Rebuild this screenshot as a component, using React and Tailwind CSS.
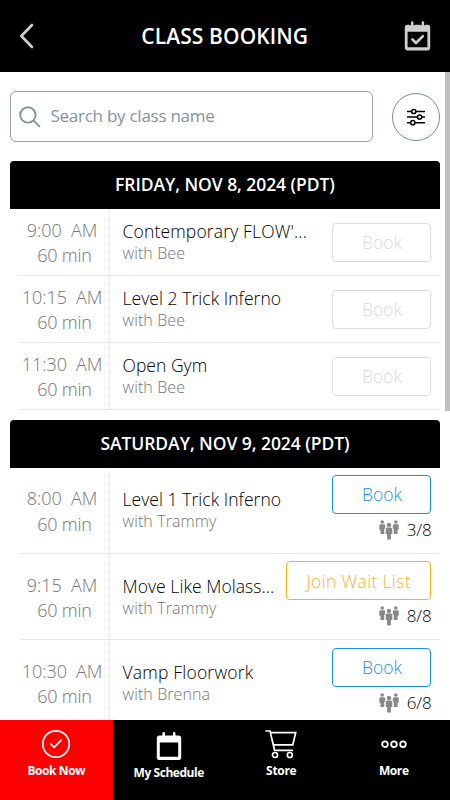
import React, { useState } from 'react';

const days = [
  {
    id: 1,
    date: "FRIDAY, NOV 8, 2024 (PDT)",
    rowClass: "h-[67.2px]",
    classes: [
      { id: 11, time: "9:00", name: "Contemporary FLOW'...", nameClass: "tracking-[0.16px]", teacher: "Bee", status: "closed" },
      { id: 12, time: "10:15", name: "Level 2 Trick Inferno", nameClass: "tracking-[0.05px]", teacher: "Bee", status: "closed" },
      { id: 13, time: "11:30", name: "Open Gym", nameClass: "tracking-[0.03px]", teacher: "Bee", status: "closed" },
    ],
  },
  {
    id: 2,
    date: "SATURDAY, NOV 9, 2024 (PDT)",
    rowClass: "h-[86.3px]",
    classes: [
      { id: 21, time: "8:00", name: "Level 1 Trick Inferno", nameClass: "tracking-[0.05px]", teacher: "Trammy", status: "open", spots: "3/8" },
      { id: 22, time: "9:15", name: "Move Like Molass...", nameClass: "tracking-[0.06px]", teacher: "Trammy", status: "full", spots: "8/8" },
      { id: 23, time: "10:30", name: "Vamp Floorwork", nameClass: "tracking-[0.2px]", teacher: "Brenna", status: "open", spots: "6/8" },
    ],
  },
];

const buttonStyles = {
  closed: "w-[99px] border-[#dedede] text-[#d9d9d9]",
  open: "w-[99px] border-[#1890ea] text-[#1890ea]",
  full: "w-[145.5px] border-[#fbb116] text-[#fbb03b] tracking-[0.35px]",
};

function BackIcon() {
  return (
    <svg width="16" height="28" viewBox="0 0 16 28" fill="none" stroke="#cfcfcf" strokeWidth="2.6" strokeLinecap="round" strokeLinejoin="round">
      <path d="M13 3 L2.3 14 L13 25" />
    </svg>
  );
}

function CalendarCheckIcon() {
  return (
    <svg width="27" height="31" viewBox="0 0 27 31" fill="none">
      <path fill="#cfcfcf" fillRule="evenodd" d="M3.5 3.8 H23.5 Q26.2 3.8 26.2 6.6 V26.6 Q26.2 29.4 23.5 29.4 H3.5 Q0.8 29.4 0.8 26.6 V6.6 Q0.8 3.8 3.5 3.8 Z M3.6 10.8 V26.2 H23.4 V10.8 Z" />
      <path stroke="#000" strokeWidth="5" d="M8.2 3 V4.2 M18.9 3 V4.2" />
      <path stroke="#cfcfcf" strokeWidth="2.5" strokeLinecap="round" d="M8.2 1.4 V6 M18.9 1.4 V6" />
      <path stroke="#cfcfcf" strokeWidth="2.5" strokeLinecap="round" strokeLinejoin="round" d="M8.4 18.4 L12 22 L18.9 15.2" />
    </svg>
  );
}

function SearchIcon() {
  return (
    <svg width="22" height="22" viewBox="0 0 22 22" fill="none" stroke="#84949c" strokeWidth="1.9" strokeLinecap="round">
      <circle cx="8.9" cy="8.9" r="7.7" />
      <path d="M14.5 14.5 L20.4 20.4" />
    </svg>
  );
}

function FilterIcon() {
  return (
    <svg width="18" height="18" viewBox="0 0 18 18" fill="none" stroke="#000" strokeWidth="1.5">
      <path d="M0 3.5 H4.5 M9.1 3.5 H18 M0 9 H10.3 M14.9 9 H18 M0 14.7 H3.5 M8.1 14.7 H18" />
      <circle cx="6.8" cy="3.5" r="2.1" />
      <circle cx="12.6" cy="9" r="2.1" />
      <circle cx="5.8" cy="14.7" r="2.1" />
    </svg>
  );
}

function PeopleIcon() {
  return (
    <svg width="20" height="20" viewBox="0 0 20 20" fill="#888">
      <circle cx="3.2" cy="2" r="1.8" />
      <path d="M1.6 4.3 H4.9 Q6.2 4.3 6.2 5.6 V8.8 H5.2 V14 H1.5 V9.8 H0.3 V5.6 Q0.3 4.3 1.6 4.3 Z" />
      <circle cx="16.8" cy="2" r="1.8" />
      <path d="M15.1 4.3 H18.4 Q19.7 4.3 19.7 5.6 V9.8 H18.5 V14 H14.8 V8.8 H13.8 V5.6 Q13.8 4.3 15.1 4.3 Z" />
      <circle cx="10" cy="5" r="2.2" />
      <path d="M8.3 7.6 H11.7 Q13.3 7.6 13.3 9.2 V14 H11.9 V19.6 H8.1 V14 H6.7 V9.2 Q6.7 7.6 8.3 7.6 Z" />
    </svg>
  );
}

function BookNowIcon() {
  return (
    <svg width="30" height="30" viewBox="0 0 30 30" fill="none" stroke="#fff" strokeWidth="1.7" strokeLinecap="round" strokeLinejoin="round">
      <circle cx="15" cy="15" r="13.2" />
      <path d="M9.7 15 L13.2 18.4 L20.3 11.2" />
    </svg>
  );
}

function ScheduleIcon() {
  return (
    <svg width="26" height="30" viewBox="0 0 26 30" fill="none">
      <path fill="#fff" fillRule="evenodd" d="M3.6 4.6 H22.4 Q25.2 4.6 25.2 7.4 V26.2 Q25.2 29 22.4 29 H3.6 Q0.8 29 0.8 26.2 V7.4 Q0.8 4.6 3.6 4.6 Z M3.8 11.5 V25.8 H22.2 V11.5 Z" />
      <path stroke="#fff" strokeWidth="2.6" strokeLinecap="round" d="M7.7 2.4 V6 M18.2 2.4 V6" />
    </svg>
  );
}

function StoreIcon() {
  return (
    <svg width="32" height="30" viewBox="0 0 32 30" fill="none" stroke="#fff" strokeWidth="1.7">
      <path d="M0.4 2 H5 L9.6 21.3 H28" />
      <path d="M5.6 3.6 H30.7 L27.8 15.8 H8.4" />
      <circle cx="10" cy="26" r="2.5" />
      <circle cx="24.8" cy="26" r="2.5" />
    </svg>
  );
}

function MoreIcon() {
  return (
    <svg width="28" height="30" viewBox="0 0 28 30" fill="none" stroke="#fff" strokeWidth="1.8">
      <circle cx="5" cy="15.2" r="2.8" />
      <circle cx="14" cy="15.2" r="2.8" />
      <circle cx="23" cy="15.2" r="2.8" />
    </svg>
  );
}

const tabs = [
  { id: "book", label: "Book Now", icon: <BookNowIcon />, padding: "pt-[9.5px]", labelClass: "mt-[2.5px] tracking-[-0.4px]" },
  { id: "schedule", label: "My Schedule", icon: <ScheduleIcon />, padding: "pt-[11.5px]", labelClass: "mt-[2.5px] tracking-[-0.45px]" },
  { id: "store", label: "Store", icon: <StoreIcon />, padding: "pt-[9.5px]", labelClass: "mt-[2.5px] tracking-[-0.3px]" },
  { id: "more", label: "More", icon: <MoreIcon />, padding: "pt-[9.5px]", labelClass: "mt-[2.5px] tracking-[-0.4px]" },
];

function ClassRow({ info, rowClass }) {
  const closed = info.status === "closed";

  return (
    <li className={`ml-[9.5px] flex shrink-0 border-b border-[#e4e8ea] ${rowClass}`}>
      <div className="flex w-[91px] shrink-0 flex-col items-center justify-center border-r border-dotted border-[#dfe5e7] pt-[3px] pr-1 text-[18px] leading-[25.5px] text-[#757575]">
        <p className="flex gap-[9px]"><span>{info.time}</span><span>AM</span></p>
        <p className="pl-[5px] tracking-[-0.25px]">60 min</p>
      </div>
      <div className="flex min-w-0 flex-auto flex-col justify-center pl-[12.5px] whitespace-nowrap">
        <p className={`text-[17.5px] leading-[23px] font-[350] text-black ${info.nameClass}`}>{info.name}</p>
        <p className="text-[16px] leading-[21px] tracking-[0.1px] text-[#757575]">with {info.teacher}</p>
      </div>
      <div className={`flex shrink-0 flex-col items-end pr-[9px] ${closed ? "justify-center pt-[1px]" : "pt-[7.5px]"}`}>
        <button className={`h-[39px] rounded-[4px] border text-[17.5px] font-[350] ${buttonStyles[info.status]}`}>
          {info.status === "full" ? "Join Wait List" : "Book"}
        </button>
        {info.spots ? (
          <div className="mt-[5px] flex items-center gap-[8px]">
            <PeopleIcon />
            <span className="text-[17px] leading-[22px] font-[350] tracking-[-0.2px]">{info.spots}</span>
          </div>
        ) : null}
      </div>
    </li>
  );
}

function App() {
  const [activeTab, setActiveTab] = useState("book")

  return (
    <div className="flex h-[800px] w-[450px] flex-col overflow-hidden bg-white font-['Open_Sans',sans-serif] font-light text-black">
      <header className="flex h-[72px] shrink-0 items-center justify-between bg-black pl-[19px] pr-[18.5px]">
        <button><BackIcon /></button>
        <h1 className="pb-[1px] pl-[10px] text-[21px] leading-[30px] font-semibold tracking-[0.1px] text-white">CLASS BOOKING</h1>
        <button><CalendarCheckIcon /></button>
      </header>

      <main className="flex min-h-0 flex-1">
        <div className="flex w-[440.4px] shrink-0 flex-col overflow-hidden pl-[9.5px]">
          <div className="mt-[19px] flex h-[51px] shrink-0 items-center justify-between">
            <label className="flex h-[51px] w-[363.5px] items-center rounded-[6px] border-[1.5px] border-[#94a2aa] pl-[8px]">
              <SearchIcon />
              <input className="ml-[10px] mb-[2px] w-[300px] font-medium text-[17px] tracking-[-0.26px] outline-none placeholder:text-[#84949c]" placeholder="Search by class name" />
            </label>
            <button className="flex h-12 w-12 items-center justify-center rounded-full border border-[#7d8d95]">
              <FilterIcon />
            </button>
          </div>

          {days.map((day, index) => (
            <section key={day.id} className={index === 0 ? "mt-[19px] shrink-0" : "mt-[10px] shrink-0"}>
              <h2 className="flex h-[47.5px] items-center justify-center rounded-t-[4px] bg-black pb-[1px] text-[17.5px] font-semibold tracking-[-0.06px] text-white">{day.date}</h2>
              <ul>
                {day.classes.map(info => (
                  <ClassRow key={info.id} info={info} rowClass={day.rowClass} />
                ))}
              </ul>
            </section>
          ))}
        </div>
        <div className="ml-auto h-[338.5px] w-[5px] bg-[#bfbfbf]"></div>
      </main>

      <nav className="grid h-[80.5px] shrink-0 grid-cols-4 bg-black text-white">
        {tabs.map(tab => (
          <button
            key={tab.id}
            onClick={() => setActiveTab(tab.id)}
            className={`flex flex-col items-center justify-start ${tab.padding} ${activeTab === tab.id ? "bg-[#ff0000]" : "bg-black"}`}
          >
            {tab.icon}
            <span className={`text-[12px] leading-[18px] font-bold ${tab.labelClass}`}>{tab.label}</span>
          </button>
        ))}
      </nav>
    </div>
  )
}

export default App;
